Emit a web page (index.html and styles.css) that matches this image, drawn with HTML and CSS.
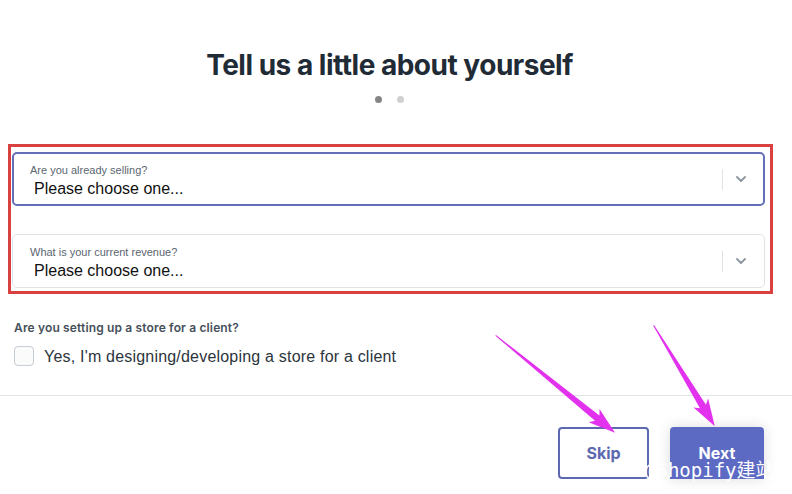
FILE: index.html
```html
<!DOCTYPE html>
<html lang="en">
<head>
    <meta charset="UTF-8">
    <title>Tell us a little about yourself</title>
    <link rel="stylesheet" href="styles.css">
</head>
<body>

<div class="page">
    <div class="header">
        <h1>Tell us a little about yourself</h1>
        <div class="dots">
            <span class="dot active"></span>
            <span class="dot"></span>
        </div>
    </div>

    <div class="highlight">
        <div class="select focused">
            <div class="select-text">
                <div class="select-label">Are you already selling?</div>
                <div class="select-value">Please choose one...</div>
            </div>
            <span class="select-sep"></span>
            <svg class="chevron" width="10" height="6" viewBox="0 0 10 6"><polyline points="1,1 5,5 9,1" fill="none" stroke="#8d969f" stroke-width="1.8" stroke-linecap="round" stroke-linejoin="round"/></svg>
        </div>
        <div class="select">
            <div class="select-text">
                <div class="select-label">What is your current revenue?</div>
                <div class="select-value">Please choose one...</div>
            </div>
            <span class="select-sep"></span>
            <svg class="chevron" width="10" height="6" viewBox="0 0 10 6"><polyline points="1,1 5,5 9,1" fill="none" stroke="#8d969f" stroke-width="1.8" stroke-linecap="round" stroke-linejoin="round"/></svg>
        </div>
    </div>

    <div class="client">
        <div class="question">Are you setting up a store for a client?</div>
        <label class="check-row">
            <span class="checkbox"></span>
            <span class="check-label">Yes, I'm designing/developing a store for a client</span>
        </label>
    </div>

    <div class="footer">
        <button class="btn btn-skip">Skip</button>
        <button class="btn btn-next">Next</button>
    </div>
</div>

<!-- annotations drawn over the screenshot -->
<svg class="arrows" width="792" height="494" viewBox="0 0 792 494">
    <polygon transform="translate(496 335) rotate(39.4)" points="0,0 131,-3.5 127,-8.5 154,0 127,8.5 131,3.5 0,1" fill="#e232ee"/>
    <polygon transform="translate(654 325) rotate(59)" points="0,0 95,-3.5 91,-8.5 118,0 91,8.5 95,3.5 0,1" fill="#e232ee"/>
</svg>
<div class="watermark">@Shopify建站</div>

</body>
</html>
```

FILE: styles.css
```css
body {
    margin: 0;
    padding: 0;
    background-color: #fff;
    font-family: 'Liberation Sans', Arial, sans-serif;
    color: #212b36;
    overflow: hidden;
    position: relative;
}

.page {
    width: 792px;
    height: 494px;
}

.header {
    padding: 47px 13px 0 0;
    text-align: center;
}

.header h1 {
    margin: 0;
    font-family: 'Inter', sans-serif;
    font-size: 28px;
    line-height: 36px;
    font-weight: 700;
    letter-spacing: -0.5px;
    color: #212b36;
}

.dots {
    display: flex;
    justify-content: center;
    gap: 15px;
    margin-top: 13px;
}

.dot {
    width: 7px;
    height: 7px;
    border-radius: 50%;
    background-color: #d0d0d0;
}

.dot.active {
    background-color: #858585;
}

/* red frame round the two selects */
.highlight {
    margin: 41px 0 0 8px;
    width: 753px;
    border: 3px solid #d8413f;
    padding: 5px 5px 3px 1px;
    display: flex;
    flex-direction: column;
    gap: 28px;
}

.select {
    box-sizing: border-box;
    height: 54px;
    border: 1px solid #dfe3e8;
    border-radius: 5px;
    display: flex;
    align-items: center;
    padding: 0 18px 0 17px;
    background: #fff;
}

.select.focused {
    border: 2px solid #6370b8;
    padding-left: 16px;
    padding-right: 17px;
}

.select-text {
    flex: 1;
    padding-top: 4px;
}

.select-label {
    font-size: 11px;
    line-height: 14px;
    color: #5b6670;
}

.select-value {
    margin: 2px 0 0 4px;
    font-size: 16px;
    line-height: 20px;
    color: #111;
}

.select-sep {
    width: 1px;
    height: 21px;
    background-color: #dfe3e8;
    margin-right: 13px;
}

.client {
    padding: 26px 0 0 14px;
}

.question {
    font-family: 'Inter', sans-serif;
    font-size: 12px;
    line-height: 16px;
    font-weight: 600;
    letter-spacing: 0.15px;
    color: #454f5b;
}

.check-row {
    display: flex;
    align-items: center;
    gap: 10px;
    margin-top: 9px;
}

.checkbox {
    box-sizing: border-box;
    width: 20px;
    height: 20px;
    border: 1px solid #c4cdd5;
    border-radius: 4px;
    background: #fbfbfb;
}

.check-label {
    font-size: 16px;
    line-height: 20px;
    padding-top: 2px;
    letter-spacing: 0.2px;
    color: #2c343c;
}

.footer {
    margin-top: 28px;
    border-top: 1px solid #e1e3e6;
    padding: 31px 28px 0 0;
    display: flex;
    justify-content: flex-end;
    gap: 21px;
}

.btn {
    box-sizing: border-box;
    height: 52px;
    font-family: 'Inter', sans-serif;
    font-size: 16px;
    font-weight: 700;
    border-radius: 4px;
    padding: 0;
}

.btn-skip {
    width: 91px;
    border: 2px solid #5c69b0;
    background: #fff;
    color: #5c69b0;
}

.btn-next {
    width: 94px;
    border: none;
    border-radius: 4px 4px 0 0;
    background: #5c6ac4;
    color: #fff;
    box-shadow: 0 0 14px rgba(0, 0, 0, 0.14);
}

.arrows {
    position: absolute;
    top: 0;
    left: 0;
    pointer-events: none;
}

.watermark {
    position: absolute;
    top: 458px;
    left: 645px;
    font-family: 'DejaVu Sans Mono', 'Noto Sans CJK SC', monospace;
    font-size: 19px;
    line-height: 24px;
    color: #fff;
    white-space: nowrap;
}
```
